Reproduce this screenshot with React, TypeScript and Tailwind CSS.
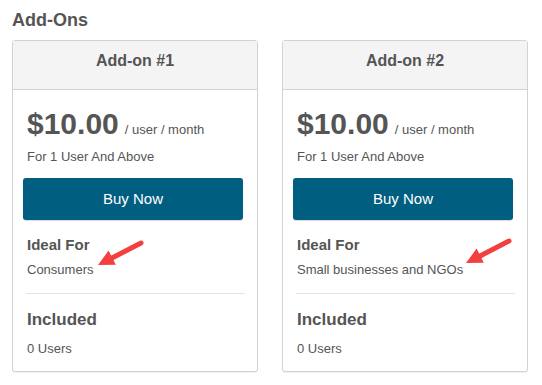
const plans = [
  {
    name: "Add-on #1",
    idealFor: "Consumers",
    arrow: "left-[80px] top-[196px]",
  },
  {
    name: "Add-on #2",
    idealFor: "Small businesses and NGOs",
    arrow: "left-[178px] top-[194px]",
  },
];

function Arrow({ className }: { className: string }) {
  return (
    <svg
      className={`absolute pointer-events-none ${className}`}
      width="54"
      height="34"
      viewBox="0 0 54 34"
    >
      <line
        x1="48"
        y1="6"
        x2="19"
        y2="21"
        stroke="#f43f3f"
        strokeWidth="5"
        strokeLinecap="round"
      />
      <polygon points="5,28 15.6,13.6 22.8,27.8" fill="#f43f3f" />
    </svg>
  );
}

function PlanCard({ plan }: { plan: (typeof plans)[number] }) {
  return (
    <div className="relative w-[246px] rounded-[3px] border border-[#d2d2d2] bg-white shadow-[0_1px_1px_rgba(0,0,0,0.06)]">
      <div className="h-[49px] border-b border-[#d2d2d2] bg-[#f4f4f4] pt-[10px] text-center text-[16px] font-bold leading-5 text-[#555]">
        {plan.name}
      </div>

      <div className="px-[14px] pb-[13px] pt-[19px] text-[#555]">
        <div className="flex items-baseline gap-[6px]">
          <span className="text-[30px] font-bold leading-[30px] text-[#555]">
            $10.00
          </span>
          <span className="text-[13px] leading-[18px]">/ user / month</span>
        </div>
        <p className="mt-[9px] text-[13px] leading-[18px]">
          For 1 User And Above
        </p>

        <button className="ml-[-4px] mt-[12px] h-[42px] w-[220px] rounded-[3px] bg-[#005e80] text-[15px] text-white shadow-[0_1px_1px_rgba(0,0,0,0.15)]">
          Buy Now
        </button>

        <h3 className="mt-[16px] text-[15px] font-bold leading-[18px]">
          Ideal For
        </h3>
        <p className="mt-[7px] text-[13px] leading-[18px]">{plan.idealFor}</p>

        <div className="ml-[-1px] mt-[14px] w-[219px] border-t border-[#e3e3e3]" />

        <h3 className="mt-[16px] text-[17px] font-bold leading-5">Included</h3>
        <p className="mt-[10px] text-[13px] leading-[18px]">0 Users</p>
      </div>

      <Arrow className={plan.arrow} />
    </div>
  );
}

export default function App() {
  return (
    <div
      className="min-h-screen bg-white px-3 pt-[9px]"
      style={{ fontFamily: '"Liberation Sans", Arial, sans-serif' }}
    >
      <h2 className="mb-[9px] text-[18px] font-bold leading-[22px] text-[#555]">
        Add-Ons
      </h2>
      <div className="flex gap-[24px]">
        {plans.map((p) => (
          <PlanCard key={p.name} plan={p} />
        ))}
      </div>
    </div>
  );
}
